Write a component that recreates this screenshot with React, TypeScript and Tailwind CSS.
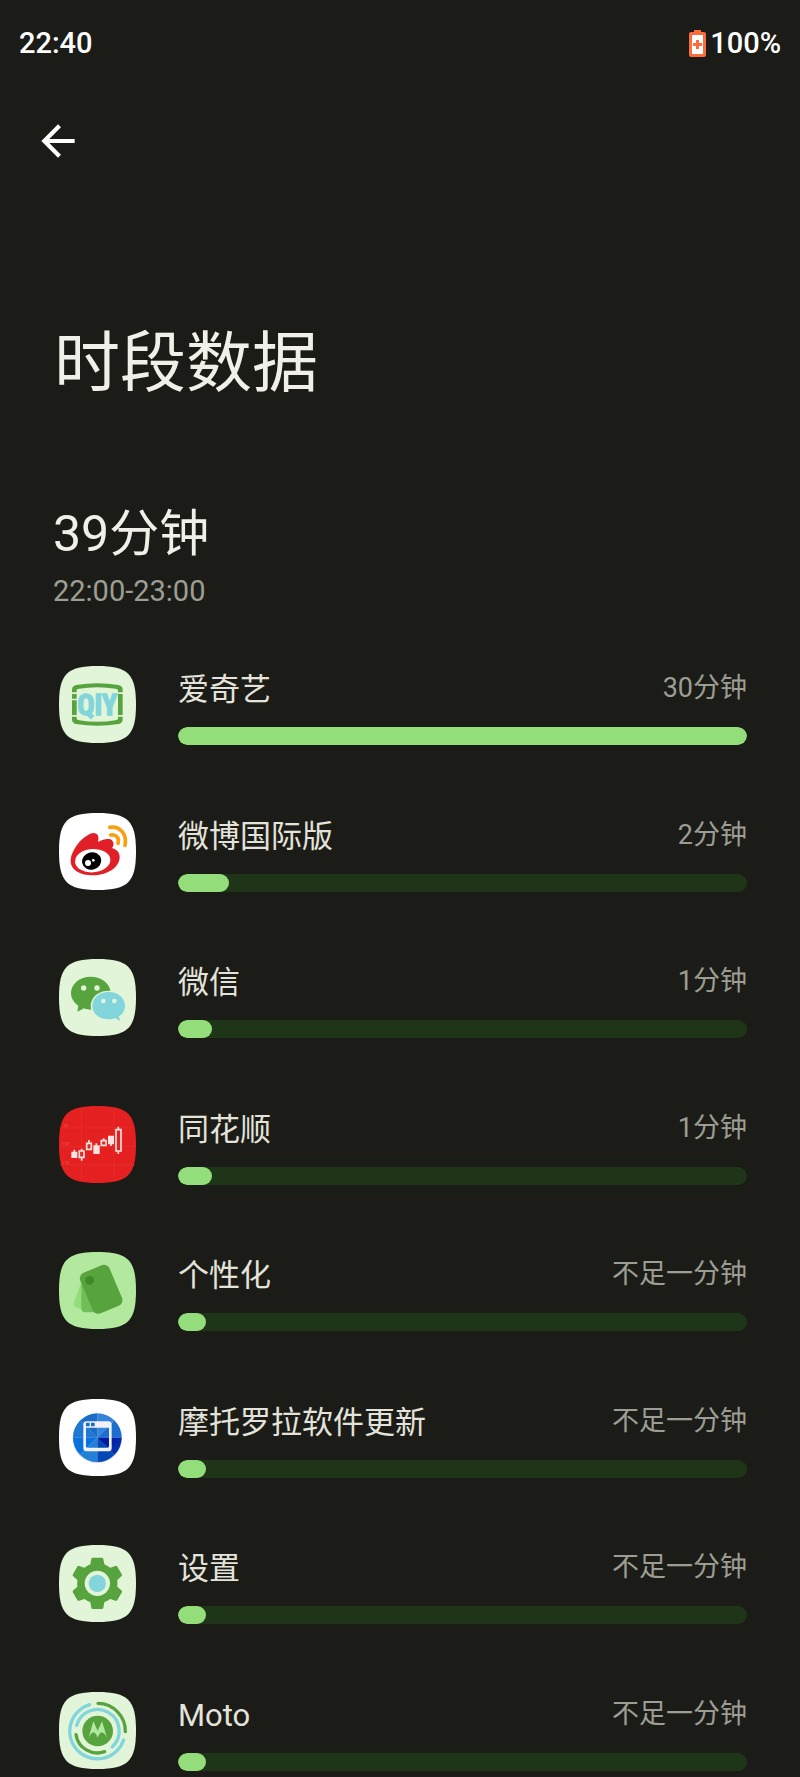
import type { ReactNode } from 'react';
import { MdArrowBack } from 'react-icons/md';

type AppUsage = {
  name: string;
  duration: string;
  percent: number;
  icon: ReactNode;
};

// Rounded tile shared by all launcher icons
function IconTile({ fill, children }: { fill: string; children: ReactNode }) {
  return (
    <svg viewBox="0 0 231 231" className="h-[77px] w-[77px] shrink-0" aria-hidden="true">
      <path
        d="M115.5 0C24 0 0 24 0 115.5S24 231 115.5 231 231 207 231 115.5 207 0 115.5 0Z"
        fill={fill}
      />
      {children}
    </svg>
  );
}

function IqiyiIcon() {
  return (
    <IconTile fill="#e2f5d9">
      <g fill="#57a33e">
        <path d="M39 79V70Q40 60 51 57Q115 47 179 57Q190 60 191 70V79H177V73Q176 69 170 68Q115 59 60 68Q54 69 53 73V79Z" />
        <path d="M39 152V161Q40 171 51 174Q115 184 179 174Q190 171 191 161V152H177V158Q176 162 170 163Q115 172 60 163Q54 162 53 158V152Z" />
        <path d="M39 84H53V98H39ZM39 103H53V147H39ZM177 84H191V147H177Z" />
      </g>
      <text
        x="115"
        y="147"
        textAnchor="middle"
        fontSize="86"
        fontWeight="700"
        fontFamily="'Liberation Sans Narrow', 'Roboto Condensed', 'Liberation Sans', sans-serif"
        fill="#82d5da"
        stroke="#82d5da"
        strokeWidth="4"
      >
        QIY
      </text>
    </IconTile>
  );
}

function WeiboIcon() {
  return (
    <IconTile fill="#ffffff">
      <path
        d="M35 144C35 117 62 76 94 62C110 56 123 64 117 87C134 78 152 75 160 83C166 90 164 99 159 105C175 110 182 119 182 132C182 164 144 187 101 187C66 187 35 172 35 144Z"
        fill="#e11f28"
      />
      <ellipse cx="101" cy="143" rx="53" ry="35" fill="#fff" transform="rotate(-4 101 143)" />
      <ellipse cx="98" cy="144" rx="29" ry="26" fill="#000" transform="rotate(-12 98 144)" />
      <circle cx="87" cy="150" r="9" fill="#fff" />
      <circle cx="103" cy="142" r="4" fill="#fff" />
      <g fill="none" stroke="#f7a011" strokeWidth="11" strokeLinecap="round">
        <path d="M152 43C184 38 205 64 198 97" />
        <path d="M155 66C171 63 182 75 177 91" />
      </g>
    </IconTile>
  );
}

function WechatIcon() {
  return (
    <IconTile fill="#e2f5d9">
      <path
        d="M95 53C62 53 36 75 36 102C36 118 45 131 58 140L55 158L75 148C82 151 90 152 98 152C130 151 155 129 155 102C155 75 128 53 95 53Z"
        fill="#57a33e"
      />
      <circle cx="74" cy="87" r="8" fill="#e2f5d9" />
      <circle cx="114" cy="87" r="8" fill="#e2f5d9" />
      <ellipse cx="149" cy="140" rx="54" ry="45" fill="#e2f5d9" />
      <path
        d="M149 99C121 99 100 117 100 140C100 163 121 181 149 181C156 181 163 180 168 177L183 186L180 172C192 164 198 153 198 140C198 117 177 99 149 99Z"
        fill="#82d5da"
      />
      <circle cx="133" cy="126" r="7" fill="#e2f5d9" />
      <circle cx="166" cy="126" r="7" fill="#e2f5d9" />
    </IconTile>
  );
}

function StocksIcon() {
  return (
    <IconTile fill="#e52020">
      <path d="M68 6V225M165 6V225M4 66H227M1 121H230M4 177H227" stroke="#e93230" strokeWidth="2" />
      <g fill="#ec4441" fontSize="13" fontFamily="Roboto, sans-serif" fontWeight="700">
        <text x="13" y="62">30</text>
        <text x="8" y="117">120</text>
        <text x="8" y="173">110</text>
      </g>
      <g fill="none" stroke="#fbe3e0" strokeWidth="5">
        <path d="M61 135H75V154H61ZM68 128V135M68 154V164" />
        <path d="M83 112H97V130H83ZM90 102V112" />
        <path d="M127 104H141V118H127ZM134 97V104" />
        <path d="M171 71H186V135H171ZM178 62V71M178 135V144" />
        <path d="M46 131V140M112 112V120M156 112V120" />
      </g>
      <path d="M37 137H55V156H37ZM103 118H122V144H103ZM147 89H165V115H147Z" fill="#fbe3e0" />
    </IconTile>
  );
}

function PersonalizeIcon() {
  return (
    <IconTile fill="#b3e89f">
      <path d="M66 94L45 149Q41 161 52 166L72 173Z" fill="#94dd7b" />
      <path d="M67 90V169Q67 181 79 181H126L110 90Z" fill="#70bf56" />
      <rect
        x="79"
        y="46"
        width="95"
        height="132"
        rx="18"
        fill="#57a33e"
        transform="rotate(-23 126 112)"
      />
      <circle cx="92" cy="85" r="13" fill="#3f8a28" />
    </IconTile>
  );
}

function MotoUpdateIcon() {
  return (
    <IconTile fill="#ffffff">
      <defs>
        <clipPath id="updateClip">
          <circle cx="115" cy="116" r="73" />
        </clipPath>
        <linearGradient id="updateDark" x1="0" y1="0" x2="1" y2="1">
          <stop offset="0" stopColor="#00109a" />
          <stop offset="1" stopColor="#0640b8" />
        </linearGradient>
      </defs>
      <circle cx="115" cy="118" r="74" fill="#c9d3e2" />
      <g clipPath="url(#updateClip)">
        <path d="M115 116V40H40V41Z" fill="#1a6cc6" />
        <path d="M115 116L40 41V116Z" fill="#1f78d2" />
        <path d="M115 116V40H190V41Z" fill="#3485d9" />
        <path d="M115 116L190 41V116Z" fill="#1c6fd0" />
        <path d="M115 116H190V191Z" fill="url(#updateDark)" />
        <path d="M115 116L190 191H115Z" fill="#0547b5" />
        <path d="M115 116V191H40Z" fill="#2280d8" />
        <path d="M115 116L40 191V116Z" fill="#0a72dc" />
      </g>
      <path
        fillRule="evenodd"
        d="M82 67H149Q158 67 158 76V148Q158 157 149 157H82Q73 157 73 148V76Q73 67 82 67ZM81 86V142Q81 146 85 146H146Q150 146 150 142V86ZM81 71V82H92V71ZM96 71V82H107V71Z"
        fill="#f1f2f6"
      />
    </IconTile>
  );
}

function SettingsIcon() {
  const teeth = [0, 60, 120, 180, 240, 300];
  return (
    <IconTile fill="#e2f5d9">
      <g fill="#57a33e">
        <circle cx="115" cy="115" r="56" />
        {teeth.map((deg) => (
          <path
            key={deg}
            d="M101 38H129Q132 38 133 42L136 58Q142 62 150 66L115 115L80 66Q88 62 94 58L97 42Q98 38 101 38Z"
            transform={`rotate(${deg} 115 115)`}
          />
        ))}
      </g>
      <circle cx="115" cy="115" r="38" fill="#e2f5d9" />
      <circle cx="115" cy="115" r="26" fill="#82d5da" />
    </IconTile>
  );
}

function MotoIcon() {
  return (
    <IconTile fill="#e2f5d9">
      <g fill="none" strokeWidth="10" strokeLinecap="round">
        <path d="M117 34A83 83 0 0 1 199 119" stroke="#57a33e" />
        <path d="M92 38A83 83 0 1 0 194 144" stroke="#82d5da" />
        <path d="M53 100A65 65 0 1 1 160 165" stroke="#82d5da" />
        <path d="M51 128A65 65 0 0 0 137 179" stroke="#57a33e" />
      </g>
      <circle cx="116" cy="117" r="46" fill="#57a33e" />
      <path
        d="M88 140L103 88L116 116L129 88L145 140Q138 123 128 121Q121 123 116 137Q111 123 104 121Q94 123 88 140Z"
        fill="#b3e89f"
      />
    </IconTile>
  );
}

function BatteryIcon() {
  return (
    <svg viewBox="0 0 17 27" className="h-[27px] w-[17px]" aria-hidden="true">
      <path
        d="M5 0H12V2H15Q17 2 17 4V25Q17 27 15 27H2Q0 27 0 25V4Q0 2 2 2H5Z"
        fill="#fb6d3c"
      />
      <path d="M3 5H14V24H3Z" fill="#fff" />
      <path d="M7 10H10V13H13V16H10V19H7V16H4V13H7Z" fill="#fb6d3c" />
    </svg>
  );
}

const apps: AppUsage[] = [
  { name: '爱奇艺', duration: '30分钟', percent: 100, icon: <IqiyiIcon /> },
  { name: '微博国际版', duration: '2分钟', percent: 9, icon: <WeiboIcon /> },
  { name: '微信', duration: '1分钟', percent: 6, icon: <WechatIcon /> },
  { name: '同花顺', duration: '1分钟', percent: 6, icon: <StocksIcon /> },
  { name: '个性化', duration: '不足一分钟', percent: 5, icon: <PersonalizeIcon /> },
  { name: '摩托罗拉软件更新', duration: '不足一分钟', percent: 5, icon: <MotoUpdateIcon /> },
  { name: '设置', duration: '不足一分钟', percent: 5, icon: <SettingsIcon /> },
  { name: 'Moto', duration: '不足一分钟', percent: 5, icon: <MotoIcon /> },
];

function UsageRow({ app }: { app: AppUsage }) {
  return (
    <li className="flex gap-[42px]">
      {app.icon}
      <div className="flex h-[79px] min-w-0 flex-1 flex-col justify-between">
        <div className="flex items-start justify-between">
          <span className="mt-1 text-[31px] leading-10 text-[#e4e3db]">{app.name}</span>
          <span className="mt-0.5 text-[27px] leading-10 text-[#9c9e93]">{app.duration}</span>
        </div>
        <div
          role="progressbar"
          aria-label={app.name}
          aria-valuenow={app.percent}
          className="h-[18px] overflow-hidden rounded-full bg-[#1f3518]"
        >
          <div className="h-full rounded-full bg-[#94dd7b]" style={{ width: `${app.percent}%` }} />
        </div>
      </div>
    </li>
  );
}

export default function App() {
  return (
    <div className="flex min-h-screen flex-col bg-[#1b1c18] pb-1.5 font-[Roboto,'Noto_Sans_CJK_SC',sans-serif]">
      <div className="flex items-center justify-between px-[19px] pt-6 text-[29px] leading-[38px] font-medium text-white">
        <span>22:40</span>
        <div className="flex items-center gap-1">
          <BatteryIcon />
          <span>100%</span>
        </div>
      </div>

      <header className="mt-[54px]">
        <button type="button" aria-label="返回" className="ml-[33px] block text-white">
          <MdArrowBack size={50} />
        </button>
        <h1 className="mt-[158px] ml-[54px] text-[66px] leading-[80px] text-[#f1f0e8]">时段数据</h1>
      </header>

      <main className="flex flex-1 flex-col">
        <section className="mt-[100px] ml-[53px]">
          <h2 className="text-[50px] leading-[60px] text-[#f1f0e8]">39分钟</h2>
          <p className="mt-[9px] text-[29px] leading-9 text-[#9c9e93]">22:00-23:00</p>
        </section>

        <ul className="mt-[57px] flex flex-1 flex-col justify-between gap-8 pr-[53px] pl-[59px]">
          {apps.map((app) => (
            <UsageRow key={app.name} app={app} />
          ))}
        </ul>
      </main>
    </div>
  );
}
